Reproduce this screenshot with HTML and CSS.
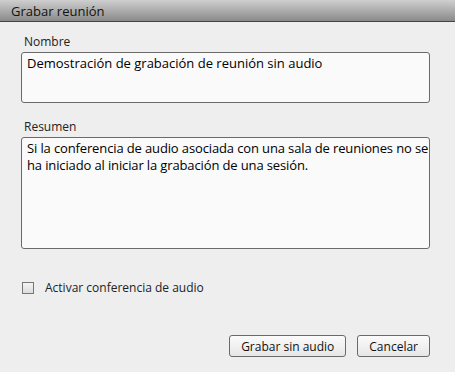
FILE: index.html
```html
<!DOCTYPE html>
<html lang="es">
<head>
  <meta charset="UTF-8">
  <title>Grabar reunión</title>
  <link rel="stylesheet" href="styles.css">
</head>
<body>
  <div class="dialog">
    <div class="titlebar">Grabar reunión</div>
    <div class="content">
      <label class="field-label">Nombre</label>
      <div class="textbox name-box">Demostración de grabación de reunión sin audio</div>
      <label class="field-label">Resumen</label>
      <div class="textbox summary-box">Si la conferencia de audio asociada con una sala de reuniones no se<br>ha iniciado al iniciar la grabación de una sesión.</div>
      <div class="check-row">
        <span class="checkbox"></span>
        <span>Activar conferencia de audio</span>
      </div>
      <div class="buttons">
        <button class="btn">Grabar sin audio</button>
        <button class="btn">Cancelar</button>
      </div>
    </div>
  </div>
</body>
</html>
```

FILE: styles.css
```css
* {
  margin: 0;
  padding: 0;
  box-sizing: border-box;
}
body {
  background: #eeeeee;
  font-family: 'Open Sans', sans-serif;
  font-size: 12px;
  color: #222;
  width: 455px;
  height: 372px;
  overflow: hidden;
}
.titlebar {
  height: 22px;
  padding: 2px 11px 0;
  font-size: 13px;
  font-weight: 500;
  color: #111;
  background: linear-gradient(#cfcfcf, #8a8a8a);
  border-bottom: 1px solid #444;
}
.content {
  padding: 11px 25px 0 21px;
  display: flex;
  flex-direction: column;
}
.field-label {
  display: block;
  font-size: 12px;
  margin-left: 3px;
  height: 19px;
}
.textbox {
  background: #fafafa;
  border: 1px solid #6a6a6a;
  border-radius: 3px;
  padding: 2px 2px 2px 5px;
  font-size: 13px;
  line-height: 17px;
  color: #000;
  white-space: nowrap;
  overflow: hidden;
}
.name-box {
  height: 51px;
  margin-bottom: 15px;
}
.summary-box {
  height: 112px;
  letter-spacing: -0.13px;
}
.check-row {
  display: flex;
  align-items: center;
  gap: 11px;
  margin-top: 30px;
  margin-left: 1px;
}
.checkbox {
  width: 12px;
  height: 12px;
  border: 1px solid #777;
  background: linear-gradient(#f4f4f4, #dcdcdc);
}
.buttons {
  display: flex;
  justify-content: flex-end;
  gap: 11px;
  margin-top: 39px;
}
.btn {
  font-family: 'Open Sans', sans-serif;
  font-size: 12px;
  height: 22px;
  padding: 0 11px;
  background: linear-gradient(#fbfbfb, #e6e6e6);
  border: 1px solid #6a6a6a;
  border-radius: 3px;
  color: #111;
}
```
